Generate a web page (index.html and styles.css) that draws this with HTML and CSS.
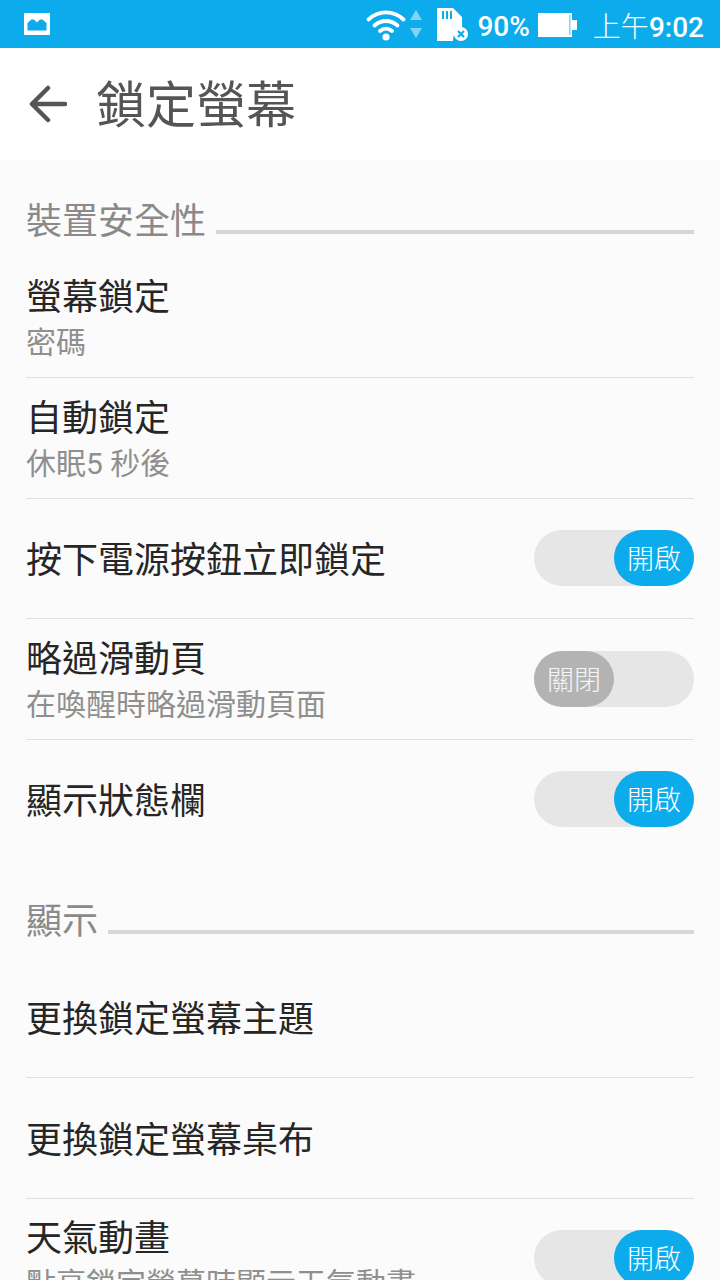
FILE: index.html
```html
<!DOCTYPE html>
<html lang="zh-Hant">
<head>
  <meta charset="UTF-8" />
  <meta name="viewport" content="width=device-width, initial-scale=1.0" />
  <title>鎖定螢幕</title>
  <link rel="stylesheet" href="styles.css">
</head>
<body>
  <div class="statusbar">
    <svg class="ic-photo" width="26" height="22" viewBox="0 0 26 22">
      <path fill="#fff" d="M0 0h26v22H0z"/>
      <path fill="#0cacec" d="M3.500 17.500v-7.500l4-3.500h2.500l3 3 3-3h2.500l4 3.500v7.500z"/>
    </svg>
    <div class="status-right">
      <svg class="ic-wifi" width="40" height="34" viewBox="0 0 40 34">
        <g fill="none" stroke="#fff" stroke-width="3.800" stroke-linecap="round">
          <path d="M2.500 12.500c10-9.500 25-9.500 35 0"/>
          <path d="M8.500 18.500c7-6 16-6 23 0"/>
          <path d="M14 24c3.500-3 8.500-3 12 0"/>
        </g>
        <circle cx="20" cy="30" r="3.600" fill="#fff"/>
      </svg>
      <svg class="ic-arrows" width="14" height="30" viewBox="0 0 14 30">
        <path fill="#7fd3f4" d="M7 1l6 10H1z"/>
        <path fill="#7fd3f4" d="M1 19h12L7 29z"/>
      </svg>
      <svg class="ic-sd" width="34" height="34" viewBox="0 0 34 34">
        <path fill="#fff" d="M2 1h16l9 9v13a10 10 0 0 0-9 11H2z"/>
        <path fill="#0cacec" d="M7 4h2v8H7zM11 4h2v8h-2zM15 4h2v8h-2z"/>
        <circle cx="26" cy="27" r="7" fill="#fff"/>
        <path fill="none" stroke="#0cacec" stroke-width="2.200" d="M23 24l6 6M29 24l-6 6"/>
      </svg>
      <span class="status-pct">90%</span>
      <svg class="ic-batt" width="40" height="24" viewBox="0 0 40 24">
        <path fill="#fff" d="M0 0h34v24H0z"/>
        <path fill="#7fd3f4" d="M31 2h1.500v20H31z"/>
        <path fill="#fff" d="M34 7h5v10h-5z"/>
      </svg>
      <span class="status-time"><span class="status-ampm">上午</span>9:02</span>
    </div>
  </div>

  <div class="toolbar">
    <svg class="ic-back" width="38" height="38" viewBox="0 0 38 38">
      <path fill="none" stroke="#555" stroke-width="4.500" stroke-linecap="round" stroke-linejoin="round" d="M36 19H3M19 3L3 19l16 16"/>
    </svg>
    <div class="toolbar-title">鎖定螢幕</div>
  </div>

  <div class="content">
    <div class="section-head"><span>裝置安全性</span><i class="section-line"></i></div>

    <div class="row">
      <div class="row-text">
        <div class="row-title">螢幕鎖定</div>
        <div class="row-sub">密碼</div>
      </div>
    </div>
    <div class="row">
      <div class="row-text">
        <div class="row-title">自動鎖定</div>
        <div class="row-sub">休眠5 秒後</div>
      </div>
    </div>
    <div class="row">
      <div class="row-text">
        <div class="row-title">按下電源按鈕立即鎖定</div>
      </div>
      <div class="toggle on"><span class="knob">開啟</span></div>
    </div>
    <div class="row">
      <div class="row-text">
        <div class="row-title">略過滑動頁</div>
        <div class="row-sub">在喚醒時略過滑動頁面</div>
      </div>
      <div class="toggle"><span class="knob">關閉</span></div>
    </div>
    <div class="row last">
      <div class="row-text">
        <div class="row-title">顯示狀態欄</div>
      </div>
      <div class="toggle on"><span class="knob">開啟</span></div>
    </div>

    <div class="section-head"><span>顯示</span><i class="section-line"></i></div>

    <div class="row">
      <div class="row-text">
        <div class="row-title">更換鎖定螢幕主題</div>
      </div>
    </div>
    <div class="row">
      <div class="row-text">
        <div class="row-title">更換鎖定螢幕桌布</div>
      </div>
    </div>
    <div class="row last">
      <div class="row-text">
        <div class="row-title">天氣動畫</div>
        <div class="row-sub">點亮鎖定螢幕時顯示天氣動畫</div>
      </div>
      <div class="toggle on"><span class="knob">開啟</span></div>
    </div>
  </div>
</body>
</html>
```

FILE: styles.css
```css
html, body {
  margin: 0;
  padding: 0;
  height: 1280px;
  overflow: hidden;
}
body {
  font-family: Roboto, "Noto Sans CJK TC", sans-serif;
  background: #fbfbfb;
  color: #222;
}
.statusbar {
  height: 48px;
  background: #0cacec;
  color: #fff;
  display: flex;
  align-items: center;
  justify-content: space-between;
  padding: 0 16px 0 24px;
}
.status-right {
  display: flex;
  align-items: center;
}
.ic-wifi {
  margin-right: 3px;
}
.ic-arrows {
  margin-right: 12px;
}
.ic-sd {
  margin-right: 8px;
}
.status-pct {
  font-size: 28px;
  font-weight: 500;
  margin-right: 8px;
  padding-top: 4px;
}
.ic-batt {
  margin-right: 15px;
  margin-top: 2px;
}
.status-time {
  font-size: 28px;
  font-weight: 500;
  padding-top: 2px;
}
.status-ampm {
  font-weight: 300;
}
.toolbar {
  height: 112px;
  background: #fff;
  display: flex;
  align-items: center;
  padding-left: 29px;
}
.ic-back {
  margin-right: 29px;
}
.toolbar-title {
  font-size: 50px;
  color: #555;
  line-height: 1;
  padding-top: 3px;
}
.content {
  padding: 0 26px;
}
.section-head {
  height: 97.2px;
  display: flex;
  align-items: center;
  font-size: 36px;
  color: #8a8a8a;
  line-height: 1;
  padding-top: 26px;
  box-sizing: border-box;
}
.section-line {
  flex: 1;
  height: 4px;
  background: #d6d6d6;
  margin-left: 10px;
  margin-top: 20px;
}
.row {
  height: 120.67px;
  box-sizing: border-box;
  border-bottom: 1px solid #e0e0e0;
  display: flex;
  align-items: center;
  justify-content: space-between;
}
.row.last {
  border-bottom-color: transparent;
  padding-bottom: 1px;
}
.row-text {
  padding-top: 5px;
}
.row-title {
  font-size: 36px;
  line-height: 46px;
  color: #262626;
}
.row-sub {
  font-size: 30px;
  line-height: 43px;
  color: #8f8f8f;
  white-space: nowrap;
}
.toggle {
  width: 160px;
  height: 56px;
  border-radius: 28px;
  background: #e6e6e6;
  display: flex;
}
.toggle.on {
  justify-content: flex-end;
}
.knob {
  width: 80px;
  height: 56px;
  border-radius: 28px;
  background: #b3b3b3;
  color: #f5f5f5;
  font-size: 27px;
  font-weight: 300;
  line-height: 60px;
  text-align: center;
}
.toggle.on .knob {
  background: #0cacec;
  color: #fff;
}
```
